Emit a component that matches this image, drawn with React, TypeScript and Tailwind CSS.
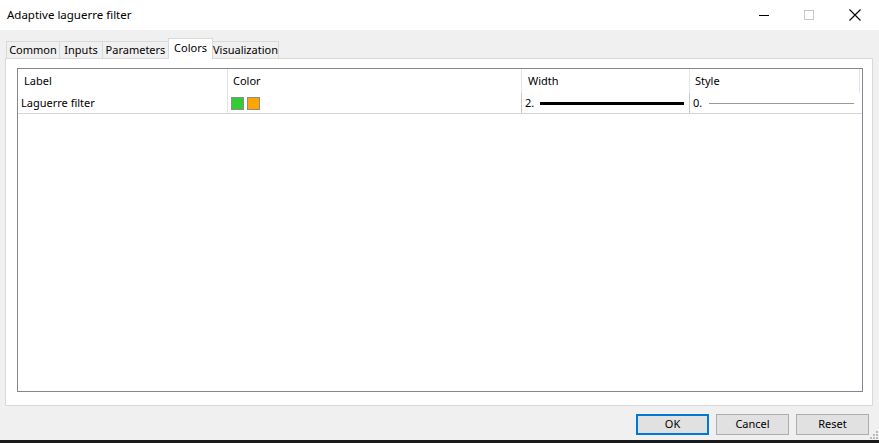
import React from 'react';

const font = { fontFamily: '"Noto Sans", "Open Sans", sans-serif' };

const tabs = ['Common', 'Inputs', 'Parameters', 'Colors', 'Visualization'];
const tabW: Record<string, string> = {
  Common: 'w-[54px]',
  Inputs: 'w-[44px]',
  Parameters: 'w-[67px]',
  Colors: 'w-[45px]',
  Visualization: 'w-[67px]',
};

export default function App() {
  return (
    <div
      className="w-[879px] h-[443px] bg-[#f0f0f0] flex flex-col relative overflow-hidden text-[11px] text-black"
      style={font}
    >
      {/* Title bar */}
      <div className="h-[30px] bg-white flex items-center shrink-0">
        <div className="pl-[7px] text-[11.5px] flex-1 -mt-[1px]">Adaptive laguerre filter</div>
        <div className="w-[46px] h-[30px] flex items-center justify-center">
          <div className="w-[10px] h-[1px] bg-black" />
        </div>
        <div className="w-[46px] h-[30px] flex items-center justify-center ml-[-1px]">
          <div className="w-[10px] h-[10px] border border-[#c8c8c8]" />
        </div>
        <div className="w-[46px] h-[30px] flex items-center justify-center mr-[1px]">
          <svg width="12" height="12" viewBox="0 0 12 12">
            <path d="M0.5 0.5 L11.5 11.5 M11.5 0.5 L0.5 11.5" stroke="#000" strokeWidth="1.1" />
          </svg>
        </div>
      </div>

      {/* Tabs */}
      <div className="flex items-end pl-[6px] pt-[7px] h-[28px] shrink-0 relative z-10">
        {tabs.map((t) => {
          const sel = t === 'Colors';
          return (
            <div
              key={t}
              className={
                sel
                  ? `${tabW[t]} h-[21px] bg-white border border-b-0 border-[#d9d9d9] flex items-start justify-center pt-[1px] -mb-[1px] -ml-[1px] whitespace-nowrap`
                  : `${tabW[t]} h-[17px] bg-[#f0f0f0] border border-b-0 border-[#d9d9d9] flex items-center justify-center -ml-[1px] first:ml-0 whitespace-nowrap`
              }
            >
              {t}
            </div>
          );
        })}
      </div>

      {/* Panel */}
      <div className="ml-[5px] w-[868px] h-[348px] bg-white border border-[#d9d9d9] shrink-0 pt-[9px] pl-[11px]">
        <div className="w-[846px] h-[324px] border border-[#828790] bg-white flex flex-col">
          {/* header */}
          <div className="flex h-[24px]">
            <div className="w-[210px] pl-[6px] flex items-center border-r border-[#e5e5e5]">Label</div>
            <div className="w-[294px] pl-[5px] flex items-center border-r border-[#e5e5e5]">Color</div>
            <div className="w-[168px] pl-[6px] flex items-center border-r border-[#e5e5e5]">Width</div>
            <div className="w-[170px] pl-[5px] flex items-center border-r border-[#e5e5e5]">Style</div>
          </div>
          {/* row */}
          <div className="flex h-[21px] border-b border-[#d5d5d5] w-[844px]">
            <div className="w-[210px] pl-[3px] flex items-center border-r border-[#e5e5e5]">Laguerre filter</div>
            <div className="w-[294px] pl-[3px] flex items-center gap-[3px] border-r border-[#c8c8c8]">
              <div className="w-[13px] h-[13px] bg-[#32cd32] border border-[#8c8c8c]" />
              <div className="w-[13px] h-[13px] bg-[#ffa500] border border-[#8c8c8c]" />
            </div>
            <div className="w-[168px] pl-[3px] flex items-center border-r border-[#c8c8c8]">
              <span>2.</span>
              <div className="ml-[6px] w-[144px] h-[3px] bg-black" />
            </div>
            <div className="w-[170px] pl-[3px] flex items-center">
              <span>0.</span>
              <div className="ml-[7px] w-[145px] h-[1px] bg-[#9a9a9a]" />
            </div>
          </div>
        </div>
      </div>

      {/* Buttons */}
      <div className="flex justify-end gap-[7px] pr-[10px] pt-[8px] shrink-0">
        <div className="w-[73px] h-[21px] bg-[#e1e1e1] border-2 border-[#0078d7] flex items-center justify-center">OK</div>
        <div className="w-[73px] h-[21px] bg-[#e1e1e1] border border-[#adadad] flex items-center justify-center">Cancel</div>
        <div className="w-[73px] h-[21px] bg-[#e1e1e1] border border-[#adadad] flex items-center justify-center">Reset</div>
      </div>

      {/* size grip */}
      <svg className="absolute right-[1px] bottom-[4px]" width="8" height="8" viewBox="0 0 8 8">
        <rect x="6" y="0" width="2" height="2" fill="#bcbcbc" />
        <rect x="3" y="3" width="2" height="2" fill="#bcbcbc" />
        <rect x="6" y="3" width="2" height="2" fill="#bcbcbc" />
        <rect x="0" y="6" width="2" height="2" fill="#bcbcbc" />
        <rect x="3" y="6" width="2" height="2" fill="#bcbcbc" />
        <rect x="6" y="6" width="2" height="2" fill="#bcbcbc" />
      </svg>

      {/* bottom strip */}
      <div className="absolute left-0 right-0 bottom-0 h-[3px] bg-[#1a1a1a]" />
    </div>
  );
}
